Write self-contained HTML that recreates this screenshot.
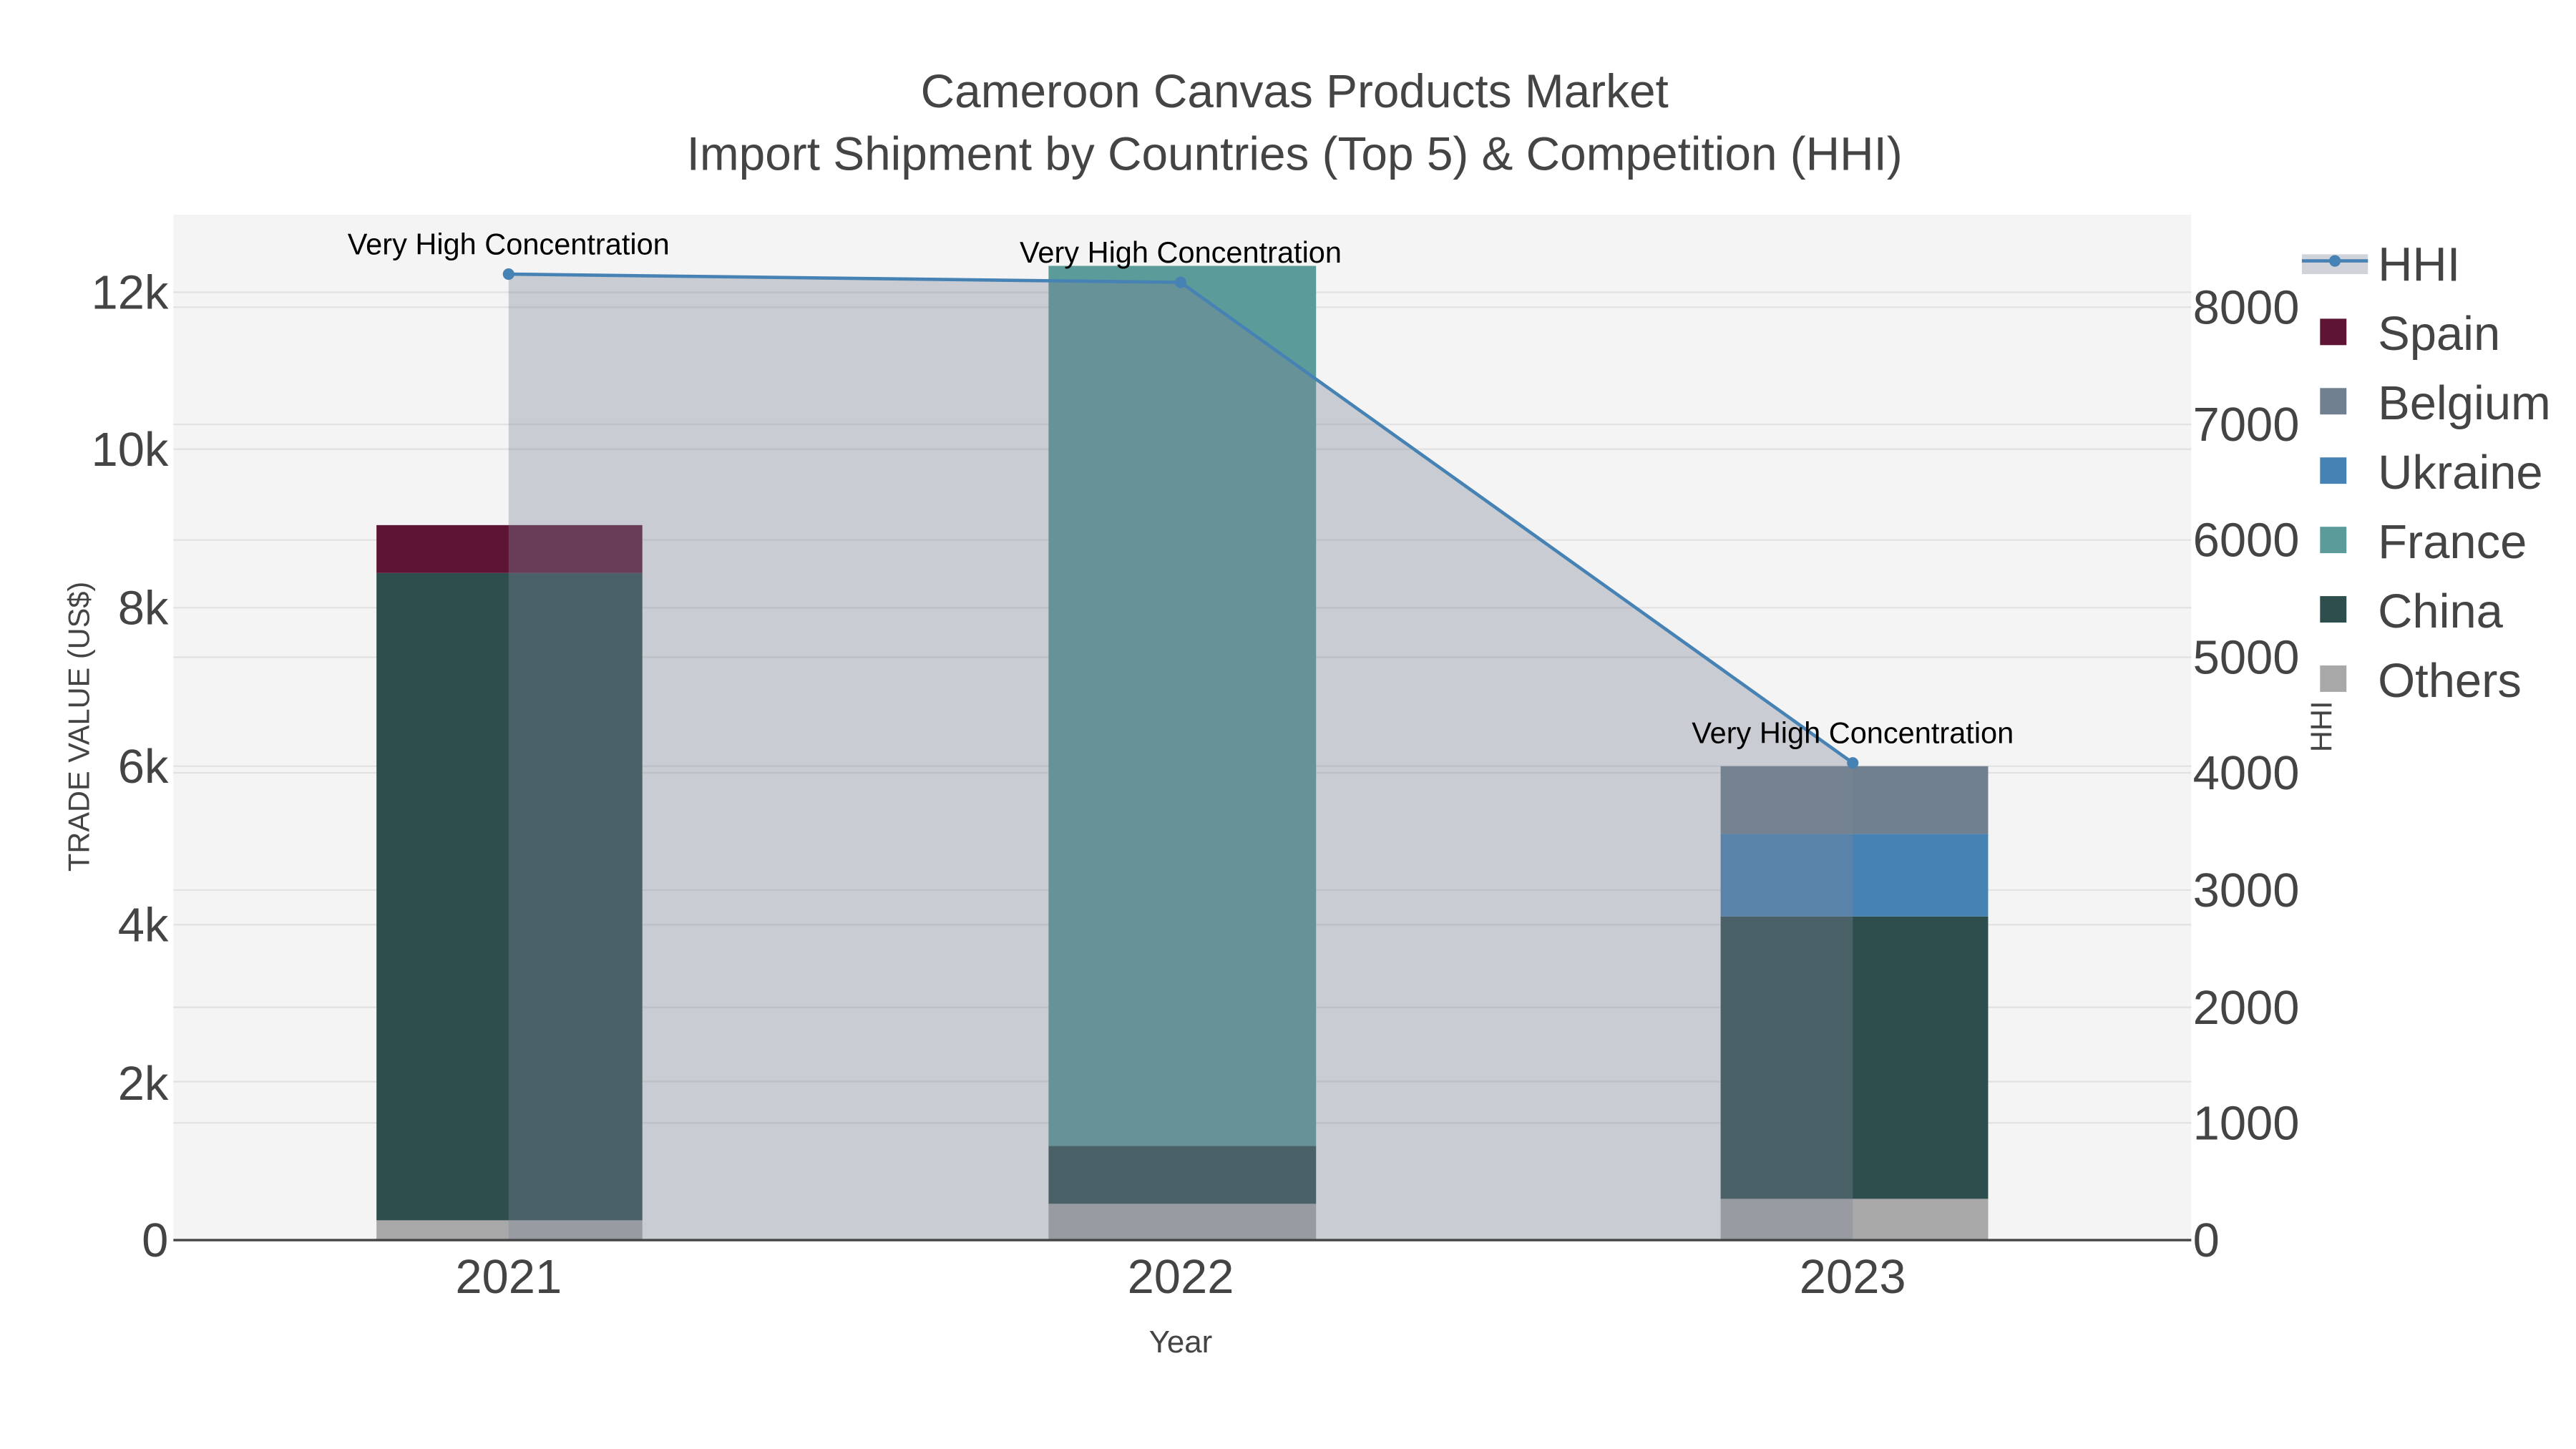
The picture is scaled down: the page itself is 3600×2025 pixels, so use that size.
<!DOCTYPE html>
<html><head><meta charset="utf-8"><style>
html,body{margin:0;padding:0;background:#fff;}
svg{display:block;font-family:"Liberation Sans",Arial,sans-serif;}
</style></head><body>
<svg width="3600" height="2025" viewBox="0 0 1560 877.5" xmlns="http://www.w3.org/2000/svg">
<rect width="1560" height="877.5" fill="#fff"/>
<rect x="105" y="130" width="1222" height="621" fill="#f4f4f4"/>
<g stroke="#e2e2e2" stroke-width="1">
<line x1="105" x2="1327" y1="655" y2="655"/><line x1="105" x2="1327" y1="560" y2="560"/>
<line x1="105" x2="1327" y1="464" y2="464"/><line x1="105" x2="1327" y1="368" y2="368"/>
<line x1="105" x2="1327" y1="272" y2="272"/><line x1="105" x2="1327" y1="177" y2="177"/>
<line x1="105" x2="1327" y1="680" y2="680"/><line x1="105" x2="1327" y1="610" y2="610"/>
<line x1="105" x2="1327" y1="539" y2="539"/><line x1="105" x2="1327" y1="468" y2="468"/>
<line x1="105" x2="1327" y1="398" y2="398"/><line x1="105" x2="1327" y1="327" y2="327"/>
<line x1="105" x2="1327" y1="257" y2="257"/><line x1="105" x2="1327" y1="186" y2="186"/>
</g>
<rect x="228" y="739" width="161" height="12" fill="#a8a8a8"/>
<rect x="228" y="347" width="161" height="392" fill="#2e4e4d"/>
<rect x="228" y="318" width="161" height="29" fill="#5e1434"/>
<rect x="635" y="729" width="162" height="22" fill="#a8a8a8"/>
<rect x="635" y="694" width="162" height="35" fill="#2e4e4d"/>
<rect x="635" y="161" width="162" height="533" fill="#5b9c9a"/>
<rect x="1042" y="726" width="162" height="25" fill="#a8a8a8"/>
<rect x="1042" y="555" width="162" height="171" fill="#2e4e4d"/>
<rect x="1042" y="505" width="162" height="50" fill="#4682b4"/>
<rect x="1042" y="464" width="162" height="41" fill="#708090"/>
<polygon points="308,166 715,171 1122,462 1122,751 308,751" fill="rgb(124,134,150)" fill-opacity="0.36"/>
<polyline points="308,166 715,171 1122,462" fill="none" stroke="#4682b4" stroke-width="2"/>
<circle cx="308" cy="166" r="3.5" fill="#4682b4"/><circle cx="715" cy="171" r="3.5" fill="#4682b4"/><circle cx="1122" cy="462" r="3.5" fill="#4682b4"/>
<line x1="105" x2="1327" y1="751" y2="751" stroke="#444" stroke-width="1.5"/>
<g font-size="18" fill="#000" text-anchor="middle">
<text x="308" y="154">Very High Concentration</text>
<text x="715" y="159">Very High Concentration</text>
<text x="1122" y="450">Very High Concentration</text>
</g>
<g font-size="28.5" fill="#444" text-anchor="middle">
<text x="784" y="65">Cameroon Canvas Products Market</text>
<text x="784" y="103">Import Shipment by Countries (Top 5) &amp; Competition (HHI)</text>
</g>
<g font-size="29" fill="#444" text-anchor="end">
<text x="102" y="761">0</text><text x="102" y="666">2k</text><text x="102" y="570">4k</text>
<text x="102" y="474">6k</text><text x="102" y="378">8k</text><text x="102" y="282">10k</text><text x="102" y="187">12k</text>
</g>
<g font-size="29" fill="#444">
<text x="1328" y="761">0</text><text x="1328" y="690">1000</text><text x="1328" y="620">2000</text>
<text x="1328" y="549">3000</text><text x="1328" y="478">4000</text><text x="1328" y="408">5000</text>
<text x="1328" y="337">6000</text><text x="1328" y="267">7000</text><text x="1328" y="196">8000</text>
</g>
<g font-size="29" fill="#444" text-anchor="middle">
<text x="308" y="783">2021</text><text x="715" y="783">2022</text><text x="1122" y="783">2023</text>
</g>
<text x="715" y="819" font-size="19" fill="#444" text-anchor="middle">Year</text>
<text transform="translate(54,440) rotate(-90)" font-size="18" fill="#444" text-anchor="middle">TRADE VALUE (US$)</text>
<text transform="translate(1412,440) rotate(-90)" font-size="18" fill="#444" text-anchor="middle">HHI</text>
<rect x="1394" y="154" width="40" height="12" fill="rgb(124,134,150)" fill-opacity="0.36"/>
<line x1="1394" x2="1434" y1="158" y2="158" stroke="#4682b4" stroke-width="2"/>
<circle cx="1414" cy="158" r="3.5" fill="#4682b4"/>
<rect x="1405" y="193" width="16" height="16" fill="#5e1434"/>
<rect x="1405" y="235" width="16" height="16" fill="#708090"/>
<rect x="1405" y="277" width="16" height="16" fill="#4682b4"/>
<rect x="1405" y="319" width="16" height="16" fill="#5b9c9a"/>
<rect x="1405" y="361" width="16" height="16" fill="#2e4e4d"/>
<rect x="1405" y="403" width="16" height="16" fill="#a8a8a8"/>
<g font-size="29" fill="#444">
<text x="1440" y="170">HHI</text><text x="1440" y="212">Spain</text><text x="1440" y="254">Belgium</text>
<text x="1440" y="296">Ukraine</text><text x="1440" y="338">France</text><text x="1440" y="380">China</text><text x="1440" y="422">Others</text>
</g>
</svg>
</body></html>
